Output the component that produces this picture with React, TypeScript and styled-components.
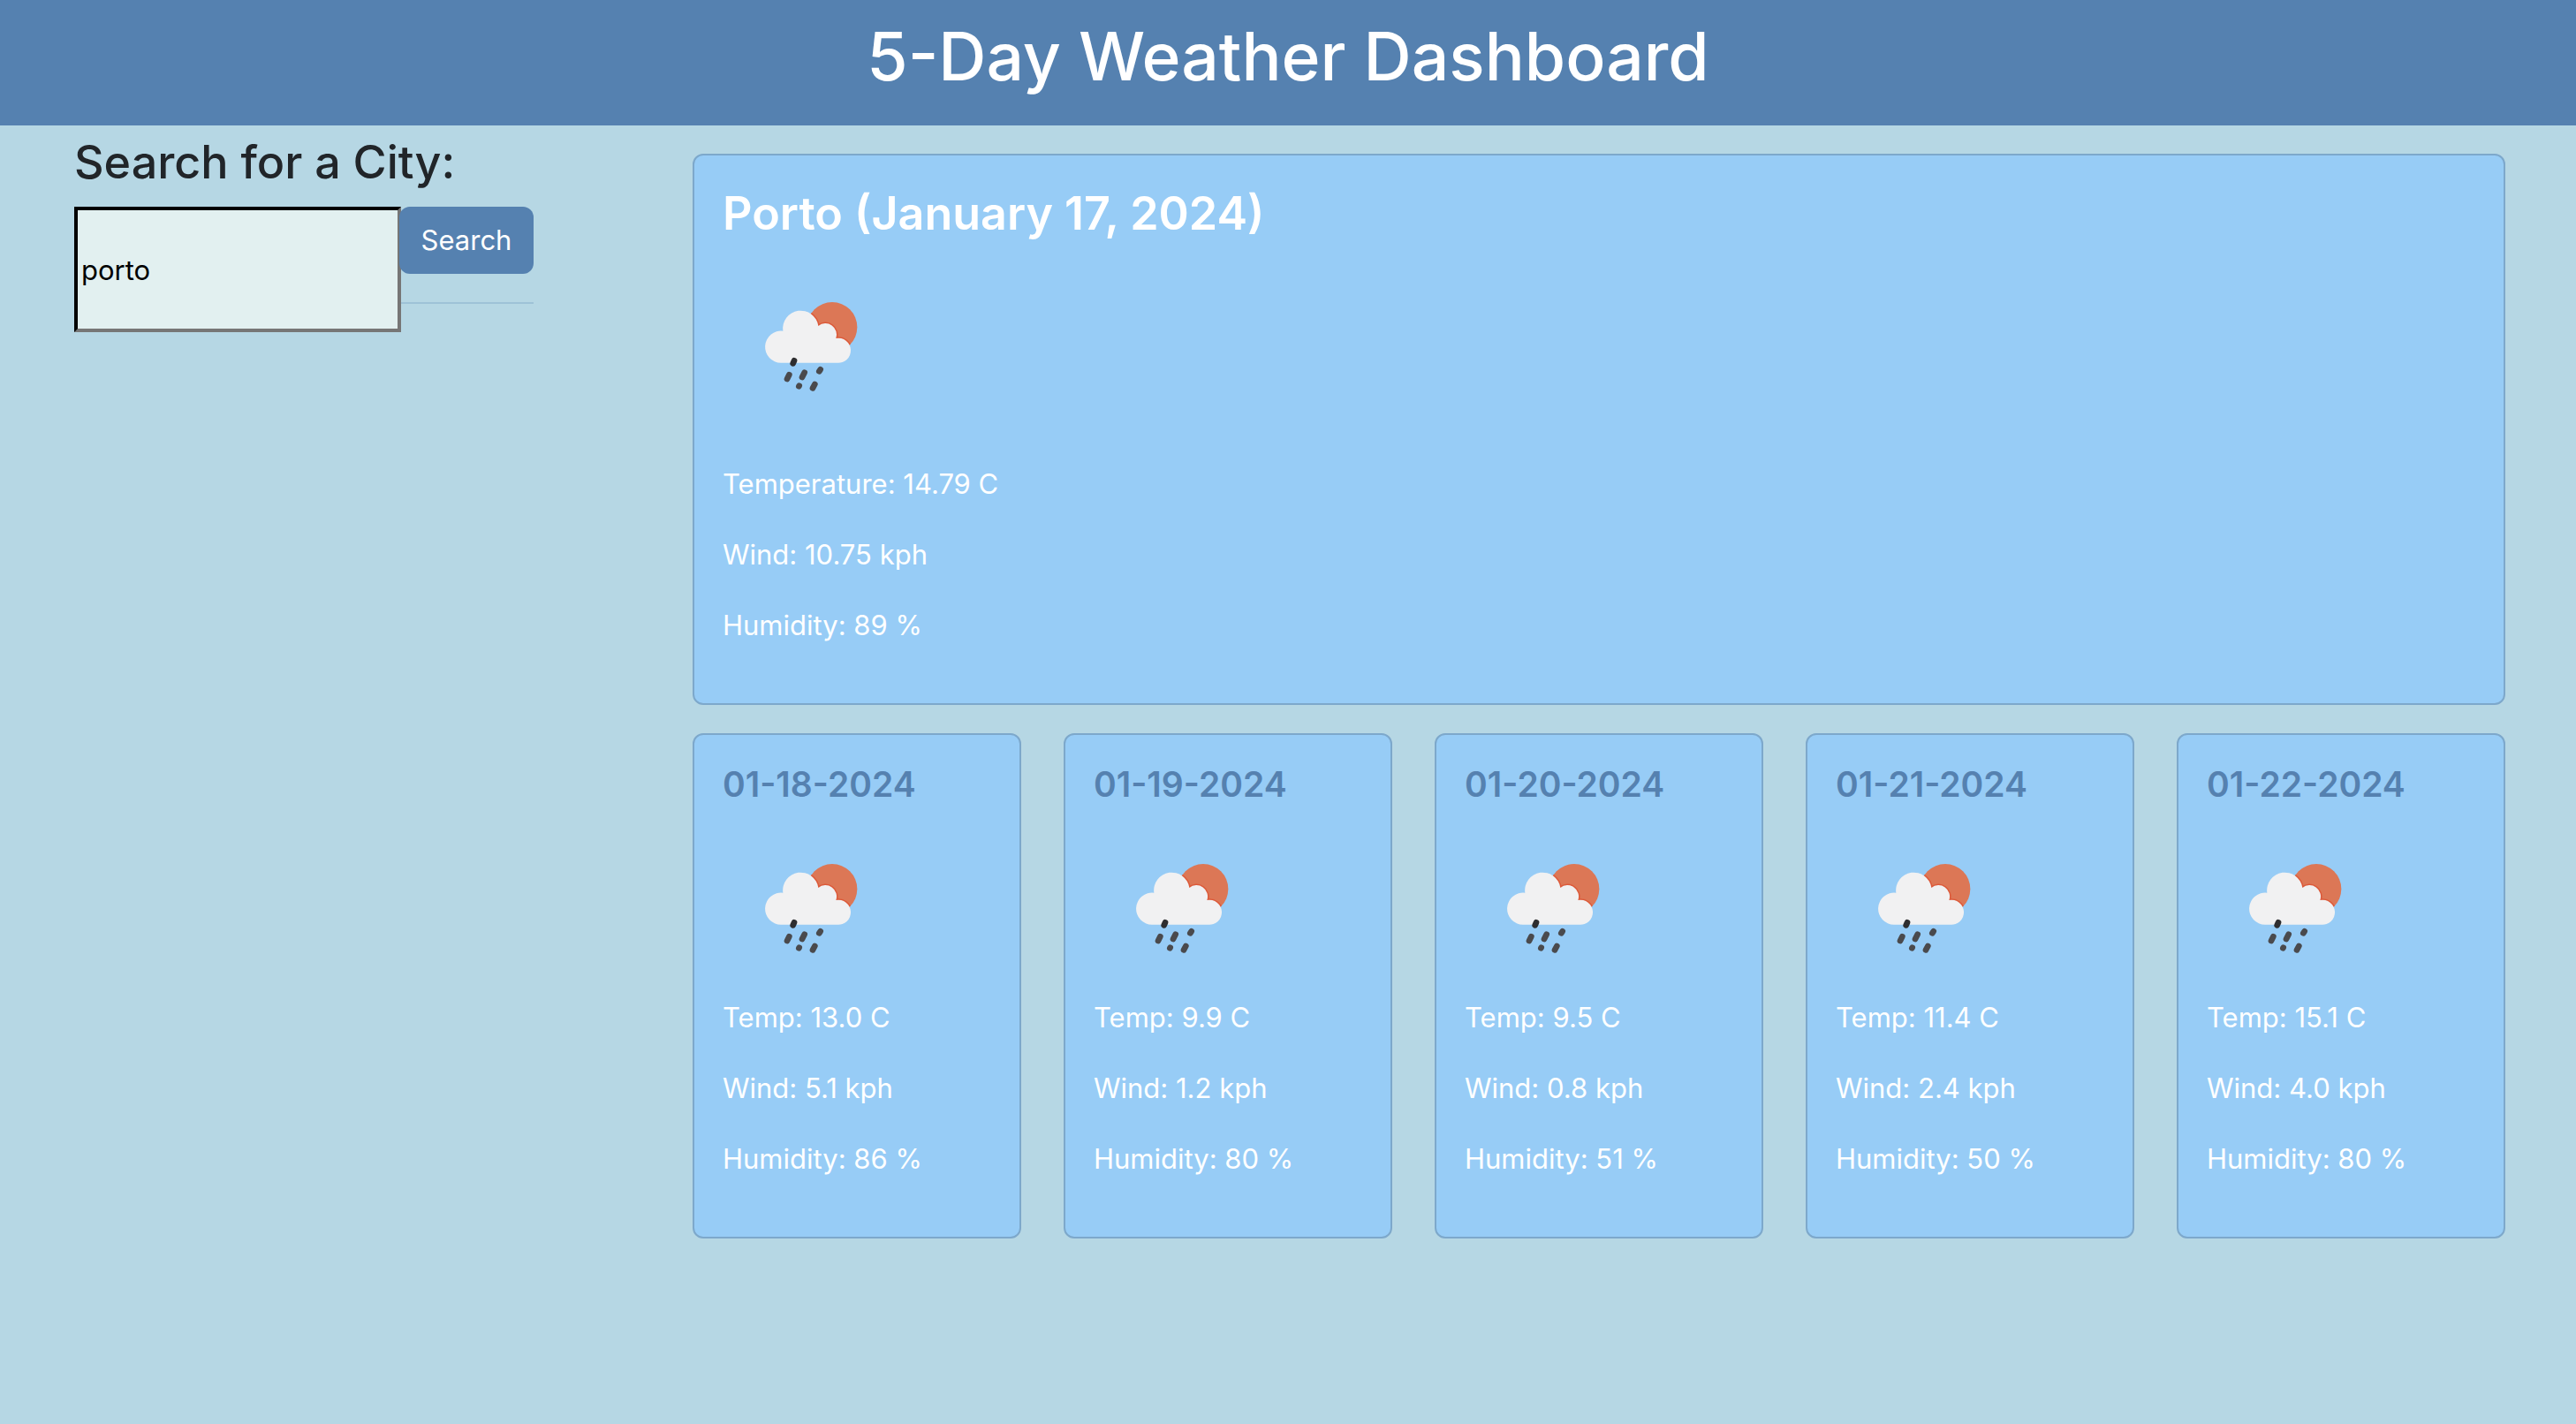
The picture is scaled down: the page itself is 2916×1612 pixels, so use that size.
import React from "react";
import styled, { createGlobalStyle } from "styled-components";

const color = {
  page: "#b6d7e4",
  steel: "#5581b0",
  card: "#97ccf6",
  cardBorder: "#7da8cb",
  field: "#e2f0f0",
  rule: "#9ec2d7",
  ink: "#212529",
};

const GlobalStyle = createGlobalStyle`
  *, *::before, *::after { box-sizing: border-box; }
  body {
    margin: 0;
    background: ${color.page};
    color: ${color.ink};
    font-family: Inter, "Liberation Sans", sans-serif;
    font-size: 31px;
    line-height: 48px;
  }
  h1, h2, h3, p { margin: 0; }
`;

const Header = styled.header`
  padding: 16px 32px 30px;
  background: ${color.steel};
  color: #fff;
  text-align: center;
`;

const PageTitle = styled.h1`
  font-size: 75px;
  font-weight: 500;
  line-height: 96px;
`;

const Layout = styled.div`
  display: grid;
  grid-template-columns: 520px minmax(0, 1fr);
  column-gap: 180px;
  align-items: start;
  padding: 0 80px 0 84px;
`;

const Sidebar = styled.aside`
  padding-top: 8px;
`;

const SearchForm = styled.form`
  display: grid;
  grid-template-columns: 370px minmax(0, 1fr);
`;

const SearchTitle = styled.h2`
  grid-column: 1 / -1;
  margin-bottom: 16px;
  font-size: 52px;
  font-weight: 500;
  line-height: 68px;
`;

const CityInput = styled.input`
  width: 100%;
  height: 142px;
  padding: 0 4px;
  border: 4px inset #767676;
  border-color: #212121 #767676 #767676 #212121;
  border-radius: 0;
  background: ${color.field};
  color: #000;
  font: inherit;
`;

const SearchActions = styled.div`
  display: flex;
  flex-direction: column;
  gap: 32px;
`;

const SearchButton = styled.button`
  height: 76px;
  margin-left: -2px;
  padding: 0;
  border: 0;
  border-radius: 12px;
  background: ${color.steel};
  color: #fff;
  font: inherit;
`;

const Rule = styled.hr`
  width: 100%;
  margin: 0;
  border: 0;
  border-top: 2px solid ${color.rule};
`;

const Content = styled.main`
  display: flex;
  flex-direction: column;
  gap: 32px;
  padding: 32px 0;
`;

const Card = styled.article`
  padding: 32px;
  border: 2px solid ${color.cardBorder};
  border-radius: 12px;
  background: ${color.card};
  color: #fff;
`;

const TodayTitle = styled.h2`
  margin-bottom: 16px;
  font-size: 52px;
  font-weight: 600;
  line-height: 68px;
`;

const DayTitle = styled.h3`
  margin-bottom: 16px;
  color: ${color.steel};
  font-size: 39px;
  font-weight: 600;
  line-height: 48px;
`;

const Forecast = styled.section`
  display: grid;
  grid-template-columns: repeat(5, minmax(0, 1fr));
  gap: 48px;
`;

const Picture = styled.svg<{ $spaced?: boolean }>`
  display: block;
  width: 200px;
  height: 200px;
  margin-bottom: ${(p) => (p.$spaced ? "32px" : "0")};
`;

const Reading = styled.p`
  margin-bottom: 32px;
`;

function RainIcon({ spaced }: { spaced?: boolean }) {
  return (
    <Picture $spaced={spaced} viewBox="0 0 600 600" role="img" aria-label="Light rain">
      <defs>
        <clipPath id="sun">
          <circle cx="372" cy="235" r="85" />
        </clipPath>
        <path
          id="cloud"
          d="M198 356 A54.2 54.2 0 1 1 205 248 A60 60 0 1 1 325 231 A38 38 0 0 1 385 273 A42 42 0 1 1 389 356 Z"
        />
      </defs>
      <circle cx="372" cy="235" r="85" fill="#dc7756" />
      <use href="#cloud" fill="none" stroke="#dc5a3a" strokeWidth="9" clipPath="url(#sun)" />
      <use href="#cloud" fill="#f1f1f2" />
      <g stroke="#4a4a4d" strokeWidth="20" strokeLinecap="round">
        <path stroke="#2e2e30" d="M243 349 L239 358" />
        <path d="M226 397 L219 411" />
        <path d="M278 389 L270 405" />
        <path d="M332 379 L328 385" />
        <path d="M260 434 L259 436" />
        <path d="M313 429 L306 442" />
      </g>
    </Picture>
  );
}

const days = [
  { date: "01-18-2024", temp: "13.0", wind: "5.1", humidity: 86 },
  { date: "01-19-2024", temp: "9.9", wind: "1.2", humidity: 80 },
  { date: "01-20-2024", temp: "9.5", wind: "0.8", humidity: 51 },
  { date: "01-21-2024", temp: "11.4", wind: "2.4", humidity: 50 },
  { date: "01-22-2024", temp: "15.1", wind: "4.0", humidity: 80 },
];

export default function App() {
  return (
    <>
      <GlobalStyle />
      <Header>
        <PageTitle>5-Day Weather Dashboard</PageTitle>
      </Header>
      <Layout>
        <Sidebar>
          <SearchForm onSubmit={(e) => e.preventDefault()}>
            <SearchTitle>
              <label htmlFor="city">Search for a City:</label>
            </SearchTitle>
            <CityInput id="city" type="text" defaultValue="porto" />
            <SearchActions>
              <SearchButton type="submit">Search</SearchButton>
              <Rule />
            </SearchActions>
          </SearchForm>
        </Sidebar>
        <Content>
          <Card>
            <TodayTitle>Porto (January 17, 2024)</TodayTitle>
            <RainIcon spaced />
            <Reading>Temperature: 14.79 C</Reading>
            <Reading>Wind: 10.75 kph</Reading>
            <Reading>Humidity: 89 %</Reading>
          </Card>
          <Forecast>
            {days.map((day) => (
              <Card key={day.date}>
                <DayTitle>{day.date}</DayTitle>
                <RainIcon />
                <Reading>Temp: {day.temp} C</Reading>
                <Reading>Wind: {day.wind} kph</Reading>
                <Reading>Humidity: {day.humidity} %</Reading>
              </Card>
            ))}
          </Forecast>
        </Content>
      </Layout>
    </>
  );
}
